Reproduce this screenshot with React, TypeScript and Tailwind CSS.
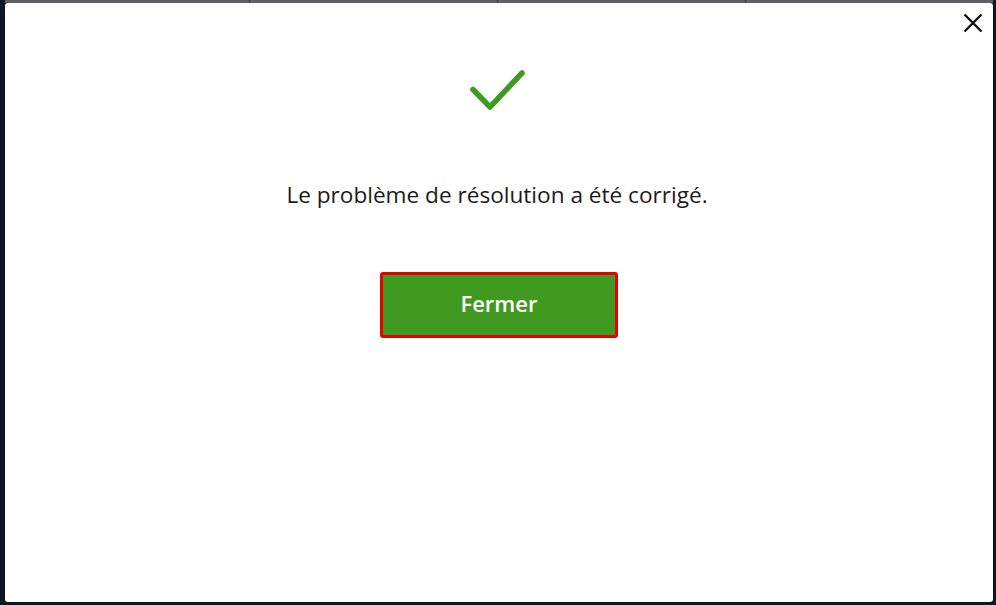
import React from "react";

export default function App() {
  return (
    <div className="w-[996px] h-[605px] bg-[#0f1720] flex flex-col overflow-hidden" style={{ fontFamily: '"Open Sans", "Noto Sans", sans-serif' }}>
      <div className="h-[3px] ml-[5px] mr-[3px] bg-[#5d5f64] flex shrink-0">
        <div className="w-[245px] border-r border-[#3a3c40]" />
        <div className="w-[248px] border-r border-[#3a3c40]" />
        <div className="w-[248px] border-r border-[#3a3c40]" />
        <div className="flex-1" />
      </div>
      <div className="flex-1 ml-[5px] mr-[3px] mb-[3px] bg-white rounded-[3px] flex flex-col items-center relative">
        <button className="absolute right-[8px] top-[8px] w-[24px] h-[24px] flex items-center justify-center">
          <svg width="20" height="20" viewBox="0 0 20 20">
            <path d="M1.5 1.5 L18.5 18.5 M18.5 1.5 L1.5 18.5" stroke="#111" strokeWidth="2.4" fill="none" />
          </svg>
        </button>
        <svg className="mt-[65px] ml-[-3px]" width="60" height="46" viewBox="0 0 60 46">
          <path d="M5 21.5 L22 39 L54 5" stroke="#3f9a1f" strokeWidth="5.5" strokeLinecap="round" strokeLinejoin="round" fill="none" />
        </svg>
        <p className="mt-[66px] text-[22.6px] leading-[30px] text-[#1b1b1b] ml-[-4px]">Le problème de résolution a été corrigé.</p>
        <button className="mt-[62px] w-[238px] h-[66px] rounded-[3px] border-[3px] border-[#e60000] bg-[#3f9a1f] text-white text-[22px] font-semibold flex items-center justify-center pb-[3px]">
          Fermer
        </button>
      </div>
    </div>
  );
}
